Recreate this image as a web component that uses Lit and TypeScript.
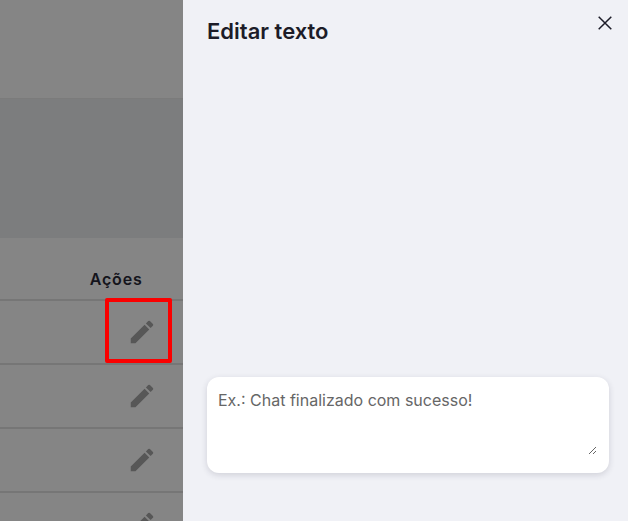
import { LitElement, html, css } from "lit";
import { customElement } from "lit/decorators.js";

const rows = [0, 1, 2, 3];

@customElement("app-root")
export class AppRoot extends LitElement {
  static styles = css`
    :host {
      display: flex;
      height: 100vh;
      overflow: hidden;
      font-family: Inter, "Liberation Sans", sans-serif;
    }
    .page {
      width: 183px;
      flex: none;
      background: #858585;
    }
    .top {
      height: 98px;
      border-bottom: 1px solid #7b7b7b;
    }
    .band {
      height: 139px;
      background: #7c7d7e;
    }
    .head {
      height: 61px;
      padding-right: 40.5px;
      display: flex;
      align-items: flex-end;
      justify-content: flex-end;
      border-bottom: 2px solid #767676;
    }
    .head span {
      font-size: 16px;
      line-height: 20px;
      margin-bottom: 10px;
      font-weight: 600;
      letter-spacing: 0.8px;
      color: #14141c;
    }
    .row {
      position: relative;
      height: 62px;
      display: flex;
      align-items: center;
      justify-content: flex-end;
      padding-right: 26px;
      border-bottom: 2px solid #767676;
    }
    .row svg {
      width: 30px;
      height: 30px;
      fill: #575757;
    }
    .mark {
      position: absolute;
      right: 11px;
      top: -3px;
      width: 59px;
      height: 57px;
      border: 4px solid #fa0000;
      border-radius: 2px;
    }
    .panel {
      flex: 1;
      display: flex;
      flex-direction: column;
      background: #f0f1f6;
      padding: 0 19px 48px 24px;
    }
    .title {
      display: flex;
      justify-content: space-between;
      align-items: flex-start;
      flex: 1;
      padding-top: 17px;
    }
    h2 {
      margin: 0;
      font-size: 22px;
      line-height: 29px;
      font-weight: 600;
      color: #1c1c28;
    }
    .close {
      width: 24px;
      height: 24px;
      margin: -6px -8px 0 0;
      padding: 0;
      border: 0;
      background: none;
    }
    .close svg {
      display: block;
      width: 24px;
      height: 24px;
      fill: none;
      stroke: #1c1c28;
      stroke-width: 1.5;
    }
    .card {
      box-sizing: border-box;
      width: 402px;
      height: 96px;
      padding: 11px 12px 18px 11px;
      border-radius: 12px;
      background: #fff;
      box-shadow: 0 2px 6px rgba(40, 40, 60, 0.16);
    }
    textarea {
      display: block;
      box-sizing: border-box;
      width: 100%;
      height: 100%;
      border: 0;
      outline: 0;
      padding: 0;
      background: transparent;
      font: 400 16px/24px Inter, "Liberation Sans", sans-serif;
      color: #1c1c28;
      resize: vertical;
    }
    textarea::placeholder {
      color: #666;
      opacity: 1;
    }
  `;

  pencil() {
    return html`<svg viewBox="0 0 24 24">
      <path
        d="M3 17.25V21h3.75L17.81 9.94l-3.75-3.75L3 17.25zM20.71 7.04c.39-.39.39-1.02 0-1.41l-2.34-2.34a.9959.9959 0 0 0-1.41 0l-1.83 1.83 3.75 3.75 1.83-1.83z"
      />
    </svg>`;
  }

  render() {
    return html`
      <section class="page">
        <div class="top"></div>
        <div class="band"></div>
        <div class="head"><span>Ações</span></div>
        ${rows.map(
          (i) => html`
            <div class="row">
              ${this.pencil()} ${i === 0 ? html`<div class="mark"></div>` : ""}
            </div>
          `
        )}
      </section>
      <aside class="panel">
        <div class="title">
          <h2>Editar texto</h2>
          <button class="close" aria-label="Fechar">
            <svg viewBox="0 0 24 24">
              <path d="M5.7 5.7 18.3 18.3M18.3 5.7 5.7 18.3" />
            </svg>
          </button>
        </div>
        <div class="card">
          <textarea placeholder="Ex.: Chat finalizado com sucesso!"></textarea>
        </div>
      </aside>
    `;
  }
}
